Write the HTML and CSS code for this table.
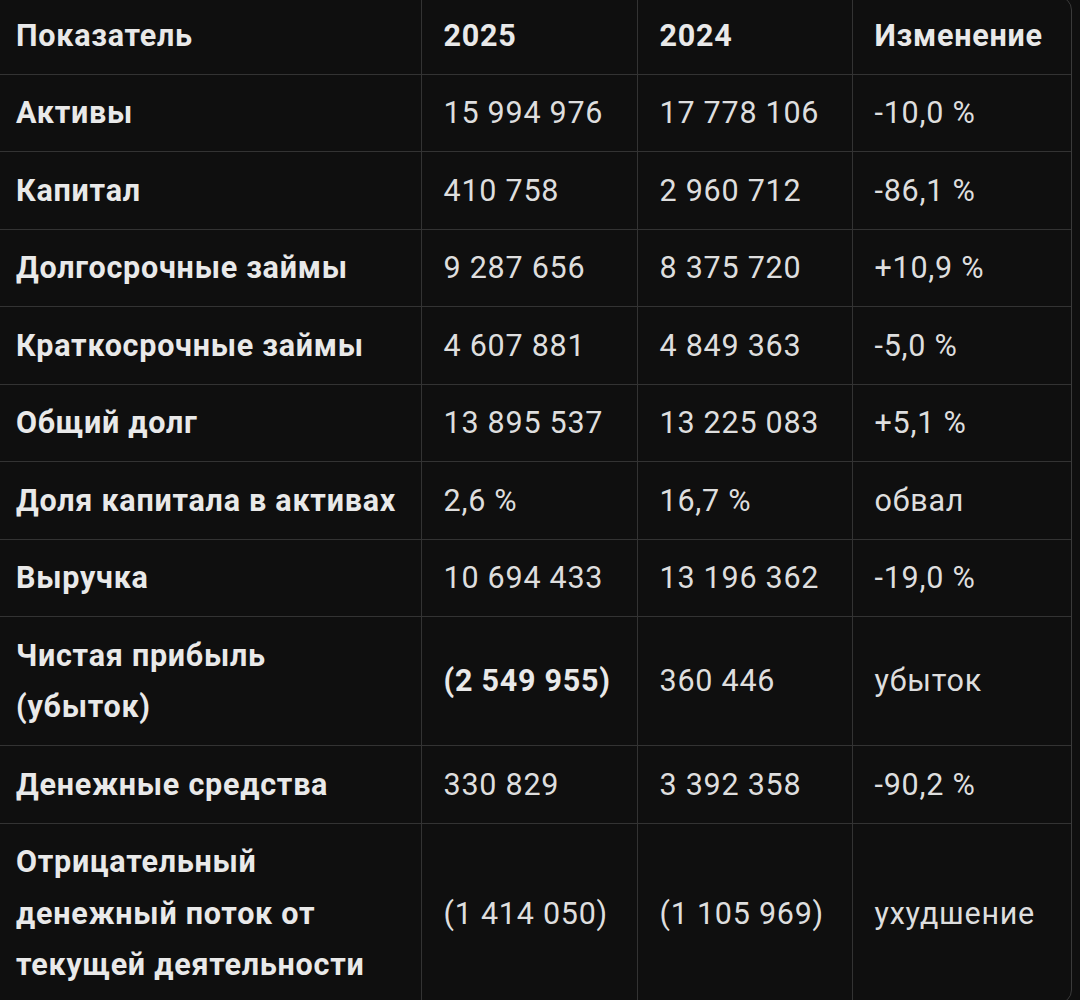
FILE: index.html
```html
<!DOCTYPE html>
<html lang="ru">
<head>
<meta charset="utf-8">
<title>Показатели</title>
<link rel="stylesheet" href="styles.css">
</head>
<body>
<div class="table-wrap">
  <table class="data">
    <colgroup>
      <col class="c1"><col class="c2"><col class="c3"><col class="c4">
    </colgroup>
    <thead>
      <tr><th>Показатель</th><th>2025</th><th>2024</th><th>Изменение</th></tr>
    </thead>
    <tbody>
      <tr><td class="label">Активы</td><td>15 994 976</td><td>17 778 106</td><td>-10,0 %</td></tr>
      <tr><td class="label">Капитал</td><td>410 758</td><td>2 960 712</td><td>-86,1 %</td></tr>
      <tr><td class="label">Долгосрочные займы</td><td>9 287 656</td><td>8 375 720</td><td>+10,9 %</td></tr>
      <tr><td class="label">Краткосрочные займы</td><td>4 607 881</td><td>4 849 363</td><td>-5,0 %</td></tr>
      <tr><td class="label">Общий долг</td><td>13 895 537</td><td>13 225 083</td><td>+5,1 %</td></tr>
      <tr><td class="label">Доля капитала в активах</td><td>2,6 %</td><td>16,7 %</td><td>обвал</td></tr>
      <tr><td class="label">Выручка</td><td>10 694 433</td><td>13 196 362</td><td>-19,0 %</td></tr>
      <tr><td class="label">Чистая прибыль<br>(убыток)</td><td class="strong">(2 549 955)</td><td>360 446</td><td>убыток</td></tr>
      <tr><td class="label">Денежные средства</td><td>330 829</td><td>3 392 358</td><td>-90,2 %</td></tr>
      <tr><td class="label">Отрицательный<br>денежный поток от<br>текущей деятельности</td><td>(1 414 050)</td><td>(1 105 969)</td><td>ухудшение</td></tr>
    </tbody>
  </table>
</div>
</body>
</html>
```

FILE: styles.css
```css
html, body {
  margin: 0;
  padding: 0;
  background: #0f0f0f;
  overflow: hidden;
}

body {
  font-family: Roboto, "Noto Sans", "Liberation Sans", sans-serif;
  color: #dedede;
}

.table-wrap {
  margin: -4px 8px 0 -6px;
  border: 1.5px solid #3a3a3a;
  border-radius: 14px;
  overflow: hidden;
  background: #0f0f0f;
}

.data {
  width: 100%;
  border-collapse: collapse;
  table-layout: fixed;
  font-size: 30.5px;
  letter-spacing: 0.75px;
  line-height: 51.5px;
}

.c1 { width: 426px; }
.c2 { width: 216px; }
.c3 { width: 215px; }
.c4 { width: auto; }

.data th,
.data td {
  text-align: left;
  vertical-align: middle;
  padding: 12.5px 6px 12.5px 22px;
  border: 1.5px solid #333333;
  white-space: nowrap;
}

.data tr > :first-child {
  border-left: none;
  padding-left: 21px;
}

.data tr > :last-child {
  border-right: none;
}

.data thead th {
  border-top: none;
  font-weight: 700;
  color: #e9e9e9;
}

.data tbody tr:last-child td {
  border-bottom: none;
}

.data td {
  font-weight: 400;
}

.data td.label,
.data td.strong {
  font-weight: 700;
  color: #e9e9e9;
}
```
